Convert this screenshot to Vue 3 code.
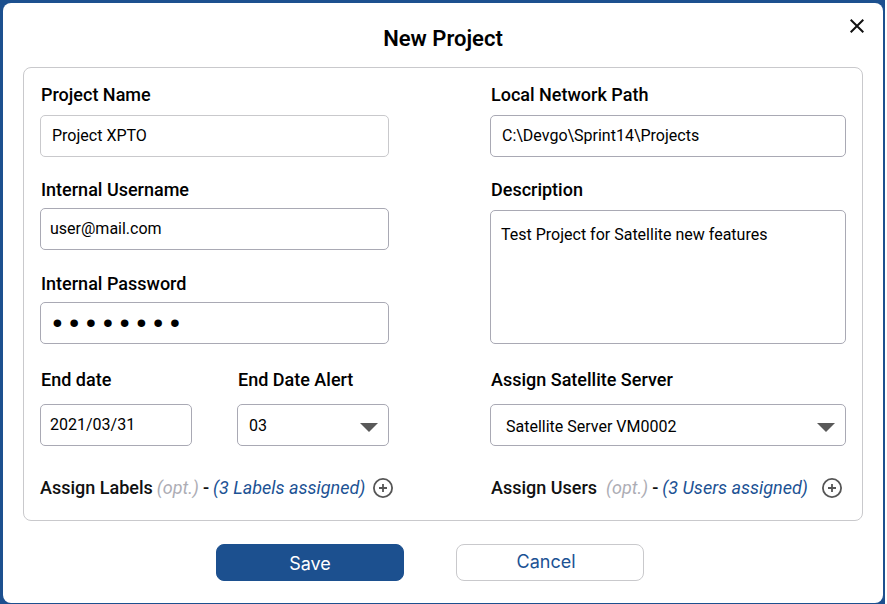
<script setup>
import { reactive } from 'vue'

const form = reactive({
  name: 'Project XPTO',
  username: 'user@mail.com',
  password: 'satellit',
  endDate: '2021/03/31',
  alert: '03',
  path: 'C:\\Devgo\\Sprint14\\Projects',
  description: 'Test Project for Satellite new features',
  server: 'Satellite Server VM0002',
})

const assigned = reactive({ labels: 3, users: 3 })
</script>

<template>
  <div class="frame">
    <main class="dialog" role="dialog" aria-labelledby="dialog-title">
      <header class="head">
        <h1 id="dialog-title" class="title">New Project</h1>
        <button class="close" type="button" aria-label="Close">
          <svg width="14" height="14" viewBox="0 0 14 14" fill="none" stroke="#111" stroke-width="2">
            <path d="M0.7 0.7 13.3 13.3M13.3 0.7 0.7 13.3" />
          </svg>
        </button>
      </header>

      <form id="project-form" class="panel" @submit.prevent>
        <div class="field">
          <label for="name">Project Name</label>
          <input id="name" v-model="form.name" class="control soft roomy" type="text" />
        </div>
        <div class="field">
          <label for="path">Local Network Path</label>
          <input id="path" v-model="form.path" class="control roomy" type="text" />
        </div>

        <div class="field snug">
          <label for="username">Internal Username</label>
          <input id="username" v-model="form.username" class="control" type="text" />
        </div>
        <div class="field tall">
          <label for="description">Description</label>
          <textarea id="description" v-model="form.description" class="control area"></textarea>
        </div>

        <div class="field snug">
          <label for="password">Internal Password</label>
          <input id="password" v-model="form.password" class="control secret" type="password" />
        </div>

        <div class="dates">
          <div class="field airy">
            <label for="end-date">End date</label>
            <input id="end-date" v-model="form.endDate" class="control" type="text" />
          </div>
          <div class="field airy">
            <label for="alert">End Date Alert</label>
            <div class="picker">
              <select id="alert" v-model="form.alert" class="control roomy">
                <option>03</option>
              </select>
              <svg class="arrow" width="18" height="9" viewBox="0 0 18 9"><path d="M0 0H18L9 9Z" fill="#595959" /></svg>
            </div>
          </div>
        </div>
        <div class="field airy">
          <label for="server">Assign Satellite Server</label>
          <div class="picker">
            <select id="server" v-model="form.server" class="control wide">
              <option>Satellite Server VM0002</option>
            </select>
            <svg class="arrow" width="18" height="9" viewBox="0 0 18 9"><path d="M0 0H18L9 9Z" fill="#595959" /></svg>
          </div>
        </div>

        <div class="assign">
          <span class="what">Assign Labels</span>
          <span class="opt">(opt.)</span>
          <span class="what">-</span>
          <a href="#labels">({{ assigned.labels }} Labels assigned)</a>
          <button class="add" type="button" aria-label="Assign labels">
            <svg width="20" height="20" viewBox="0 0 20 20" fill="none" stroke="#555">
              <circle cx="10" cy="10" r="9.1" stroke-width="1.8" />
              <path d="M10 6V14M6 10H14" stroke-width="1.8" />
            </svg>
          </button>
        </div>
        <div class="assign users">
          <span class="what">Assign Users</span>
          <span class="opt">(opt.)</span>
          <span class="what">-</span>
          <a href="#users">({{ assigned.users }} Users assigned)</a>
          <button class="add" type="button" aria-label="Assign users">
            <svg width="20" height="20" viewBox="0 0 20 20" fill="none" stroke="#555">
              <circle cx="10" cy="10" r="9.1" stroke-width="1.8" />
              <path d="M10 6V14M6 10H14" stroke-width="1.8" />
            </svg>
          </button>
        </div>
      </form>

      <footer class="actions">
        <button class="btn save" type="submit" form="project-form">Save</button>
        <button class="btn cancel" type="button">Cancel</button>
      </footer>
    </main>
  </div>
</template>

<style>
body {
  margin: 0;
  background: #fff;
}
</style>

<style scoped>
.frame {
  box-sizing: border-box;
  min-height: 100vh;
  margin-right: 2px;
  padding: 3px 2px 1px 3px;
  display: flex;
  background: #1c508f;
  font-family: Roboto, "Liberation Sans", sans-serif;
  color: #000;
}
.dialog {
  flex: 1;
  min-width: 0;
  padding: 0 20px 22px;
  background: #fff;
  border-radius: 8px;
}
.head {
  display: grid;
  grid-template-columns: 1fr auto 1fr;
  align-items: start;
  height: 64px;
}
.title {
  grid-column: 2;
  margin: 0;
  padding-top: 22px;
  font-size: 22px;
  line-height: 28px;
  font-weight: 600;
}
.close {
  grid-column: 3;
  justify-self: end;
  margin: 16px -1px 0 0;
  padding: 0;
  border: 0;
  background: none;
  display: flex;
}
.panel {
  display: grid;
  grid-template-columns: minmax(0, 349fr) minmax(0, 356fr);
  grid-template-rows: minmax(95px, auto) minmax(94px, auto) minmax(96px, auto) minmax(108px, auto) auto;
  column-gap: 101px;
  padding: 15px 16px 20px;
  border: 1px solid #c9c9cc;
  border-radius: 8px;
}
.field {
  display: flex;
  flex-direction: column;
  gap: 8px;
  min-width: 0;
}
.snug {
  gap: 6px;
}
.airy {
  gap: 12px;
}
.tall {
  grid-row: 2 / span 2;
  grid-column: 2;
}
.field label {
  padding-left: 1px;
  font-size: 18px;
  line-height: 24px;
  font-weight: 500;
}
.control {
  box-sizing: border-box;
  width: 100%;
  height: 42px;
  margin: 0;
  padding: 0 9px 2px;
  border: 1px solid #a9a9b4;
  border-radius: 5px;
  background: #fff;
  color: #000;
  font-family: inherit;
  font-size: 16px;
  line-height: 20px;
}
.roomy {
  padding: 0 11px 2px;
}
.soft {
  border-color: #c9c9cc;
}
.area {
  height: 134px;
  padding: 14px 10px;
  resize: none;
}
.secret {
  padding: 3px 8px 0;
  font-family: "Liberation Mono", monospace;
  font-size: 28px;
}
.dates {
  display: grid;
  grid-template-columns: 1fr 1fr;
  gap: 45px;
}
.picker {
  display: grid;
  align-items: center;
}
.picker > * {
  grid-area: 1 / 1;
}
.picker select {
  appearance: none;
  padding: 2px 11px 0;
}
.picker .wide {
  padding: 3px 15px 0;
}
.arrow {
  justify-self: end;
  margin: 4px 11px 0 0;
  pointer-events: none;
}
.assign {
  display: flex;
  align-items: center;
  gap: 4px;
  font-size: 18px;
  line-height: 24px;
  white-space: nowrap;
}
.what {
  font-weight: 500;
  color: #111;
}
.opt {
  font-style: italic;
  color: #adadb5;
}
.assign a {
  font-style: italic;
  color: #1c5294;
  text-decoration: none;
}
.add {
  margin-left: 4px;
  padding: 0;
  border: 0;
  background: none;
  display: flex;
}
.users {
  padding-left: 1px;
}
.users .opt {
  margin-left: 5px;
}
.users .add {
  margin-left: 10px;
}
.actions {
  display: flex;
  justify-content: center;
  gap: 52px;
  padding: 23px 26px 0 0;
}
.btn {
  box-sizing: border-box;
  width: 188px;
  height: 37px;
  padding: 0;
  border: 1px solid #c9c9cc;
  border-radius: 8px;
  font-family: Inter, sans-serif;
  font-size: 18px;
  line-height: 24px;
  font-weight: 400;
}
.save {
  padding-top: 2px;
  border-color: #1c508f;
  background: #1c508f;
  color: #fff;
}
.cancel {
  padding: 0 8px 2px 0;
  background: #fff;
  color: #1c5294;
}
</style>
